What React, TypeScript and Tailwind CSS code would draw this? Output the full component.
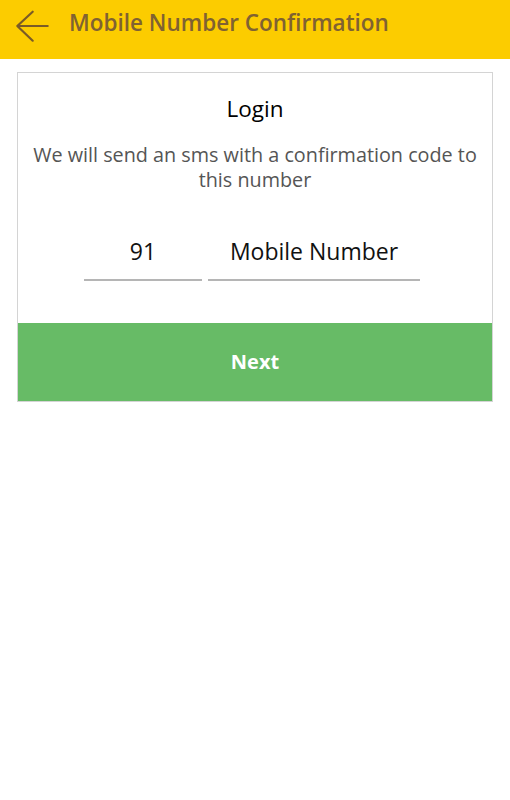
import React from 'react';

const BackArrow: React.FC = () => (
  <svg width="34" height="34" viewBox="0 0 34 34" fill="none" stroke="#7a5b27" strokeWidth="2.2" strokeLinecap="round" strokeLinejoin="round">
    <path d="M32.7 17H2.3M17.7 2.7L2.3 17l15.4 14.7" />
  </svg>
);

const App: React.FC = () => {
  return (
    <div className="min-h-screen bg-white font-['Open_Sans',sans-serif]">
      {/* Header */}
      <div className="h-[59px] bg-[#fccc00] flex items-start">
        <div className="ml-[15px] mt-[9px]">
          <BackArrow />
        </div>
        <h1 className="ml-[20px] mt-[12px] text-[22.5px] font-semibold text-[#806232] leading-none">
          Mobile Number Confirmation
        </h1>
      </div>

      {/* Card */}
      <div className="mx-[17px] mt-[13px] border border-[#d4d4d4]">
        <div className="pt-[21px] pb-[42px] px-[10px] text-center">
          <h2 className="text-[22.5px] text-black leading-[30px]">Login</h2>
          <p className="mt-[18px] text-[19.8px] text-[#555] leading-[25px]">
            We will send an sms with a confirmation code to this number
          </p>
          <div className="mt-[44px] flex justify-center gap-[6px] mr-[6px]">
            <div className="w-[118px] border-b-2 border-[#b5b5b5] pb-[13px] text-[23px] text-[#111] leading-[30px]">
              91
            </div>
            <div className="w-[212px] border-b-2 border-[#b5b5b5] pb-[13px] text-[23px] text-[#111] leading-[30px]">
              Mobile Number
            </div>
          </div>
        </div>
        <button className="w-full h-[78px] bg-[#67bb66] text-white text-[20px] font-bold">
          Next
        </button>
      </div>
    </div>
  );
};

export default App;
